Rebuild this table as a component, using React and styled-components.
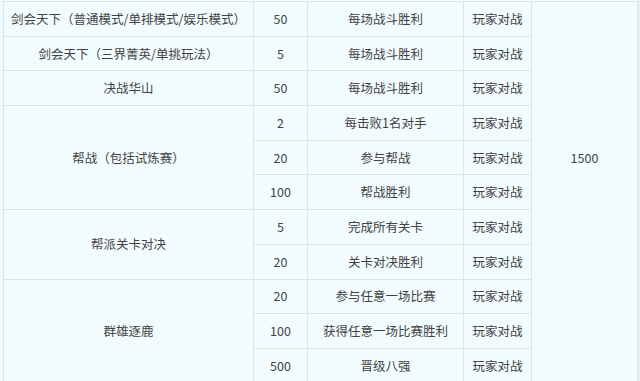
import React from 'react';
import styled, { createGlobalStyle } from 'styled-components';

const GlobalStyle = createGlobalStyle`
  html, body {
    margin: 0;
    padding: 0;
    background: #e9eeef;
    overflow: hidden;
  }
`;

const Page = styled.div`
  display: flex;
  height: 381px;
  overflow: hidden;
`;

const Sheet = styled.div`
  width: 634px;
  padding: 1px 0 0 3px;
  background: #f2fcfe;
  border-right: 1px solid #dde8ea;
`;

const Table = styled.table`
  width: 634px;
  table-layout: fixed;
  border-collapse: collapse;
  font-family: "Noto Sans CJK SC", "Noto Sans", sans-serif;
  font-size: 12.5px;
  color: #424242;
`;

const Col = styled.col`
  width: ${(p) => p.$w}px;
`;

const Row = styled.tr`
  height: 34.7px;
`;

const Cell = styled.td`
  border: 1px solid #d8e6e9;
  text-align: center;
  vertical-align: middle;
  padding: 0;
  white-space: nowrap;
  line-height: 18px;
`;

const TotalCell = styled(Cell)`
  vertical-align: top;
  padding-top: 147px;
`;

const widths = [250, 54, 156, 68, 106];

const rows = [
  { name: '剑会天下（普通模式/单排模式/娱乐模式）', span: 1, pts: '50', cond: '每场战斗胜利' },
  { name: '剑会天下（三界菁英/单挑玩法）', span: 1, pts: '5', cond: '每场战斗胜利' },
  { name: '决战华山', span: 1, pts: '50', cond: '每场战斗胜利' },
  { name: '帮战（包括试炼赛）', span: 3, pts: '2', cond: '每击败1名对手' },
  { pts: '20', cond: '参与帮战' },
  { pts: '100', cond: '帮战胜利' },
  { name: '帮派关卡对决', span: 2, pts: '5', cond: '完成所有关卡' },
  { pts: '20', cond: '关卡对决胜利' },
  { name: '群雄逐鹿', span: 3, pts: '20', cond: '参与任意一场比赛' },
  { pts: '100', cond: '获得任意一场比赛胜利' },
  { pts: '500', cond: '晋级八强' },
];

const App = () => {
  return (
    <Page>
      <GlobalStyle />
      <Sheet>
        <Table>
          <colgroup>
            {widths.map((w, i) => (
              <Col key={i} $w={w} />
            ))}
          </colgroup>
          <tbody>
            {rows.map((r, i) => (
              <Row key={i}>
                {r.name && <Cell rowSpan={r.span}>{r.name}</Cell>}
                <Cell>{r.pts}</Cell>
                <Cell>{r.cond}</Cell>
                <Cell>玩家对战</Cell>
                {i === 0 && <TotalCell rowSpan={rows.length}>1500</TotalCell>}
              </Row>
            ))}
          </tbody>
        </Table>
      </Sheet>
    </Page>
  );
};

export default App;
